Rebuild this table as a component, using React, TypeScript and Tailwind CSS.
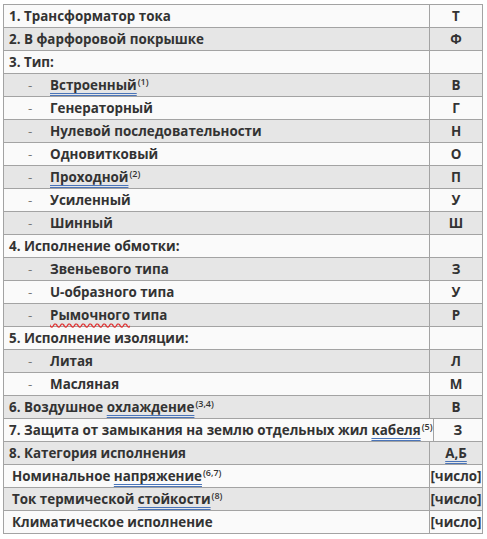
type Row = {
  label: React.ReactNode;
  code?: React.ReactNode;
  sub?: boolean;
  indent?: boolean;
};

const blue = "underline decoration-double decoration-[#4a74b8] underline-offset-[3px]";
const red = "underline decoration-wavy decoration-[#e03030] underline-offset-[3px]";

function Sup({ children }: { children: React.ReactNode }) {
  return <sup className="text-[9px] font-semibold top-[-5px] ml-px">{children}</sup>;
}

const rows: Row[] = [
  { label: "1. Трансформатор тока", code: "Т" },
  { label: "2. В фарфоровой покрышке", code: "Ф" },
  { label: "3. Тип:" },
  { label: <><span className={blue}>Встроенный</span><Sup>(1)</Sup></>, code: "В", sub: true },
  { label: "Генераторный", code: "Г", sub: true },
  { label: "Нулевой последовательности", code: "Н", sub: true },
  { label: "Одновитковый", code: "О", sub: true },
  { label: <><span className={blue}>Проходной</span><Sup>(2)</Sup></>, code: "П", sub: true },
  { label: "Усиленный", code: "У", sub: true },
  { label: "Шинный", code: "Ш", sub: true },
  { label: "4. Исполнение обмотки:" },
  { label: "Звеньевого типа", code: "З", sub: true },
  { label: "U-образного типа", code: "У", sub: true },
  { label: <><span className={red}>Рымочного</span> типа</>, code: "Р", sub: true },
  { label: "5. Исполнение изоляции:" },
  { label: "Литая", code: "Л", sub: true },
  { label: "Масляная", code: "М", sub: true },
  { label: <>6. Воздушное <span className={blue}>охлаждение</span><Sup>(3,4)</Sup></>, code: "В" },
  {
    label: <>7. Защита от замыкания на землю отдельных жил <span className={blue}>кабеля</span><Sup>(5)</Sup></>,
    code: "З",
  },
  { label: "8. Категория исполнения", code: <span className={blue}>А,Б</span> },
  { label: <>Номинальное <span className={blue}>напряжение</span><Sup>(6,7)</Sup></>, code: "[число]", indent: true },
  { label: <>Ток термической <span className={blue}>стойкости</span><Sup>(8)</Sup></>, code: "[число]", indent: true },
  { label: "Климатическое исполнение", code: "[число]", indent: true },
];

export default function App() {
  return (
    <div className="min-h-[539px] bg-white pt-[4px] pl-[3px] font-['Open_Sans',sans-serif] text-[13.4px] font-bold text-[#333]">
      <div className="w-[480px] border border-b-0 border-[#a3a3a3]">
        {rows.map((r, i) => (
          <div
            key={i}
            className={`flex h-[23px] border-b border-[#a3a3a3] ${i % 2 ? "bg-[#e6e6e6]" : "bg-[#fafafa]"}`}
          >
            <div
              className={`flex flex-1 items-center whitespace-nowrap ${r.indent ? "pl-[8px]" : "pl-[5px]"}`}
            >
              {r.sub ? (
                <>
                  <span className="w-[41px] pl-[19px] font-normal text-[#777]">-</span>
                  <span>{r.label}</span>
                </>
              ) : (
                <span>{r.label}</span>
              )}
            </div>
            <div className="flex w-[53px] items-center justify-center border-l border-[#a3a3a3] whitespace-nowrap">
              {r.code}
            </div>
          </div>
        ))}
      </div>
    </div>
  );
}
